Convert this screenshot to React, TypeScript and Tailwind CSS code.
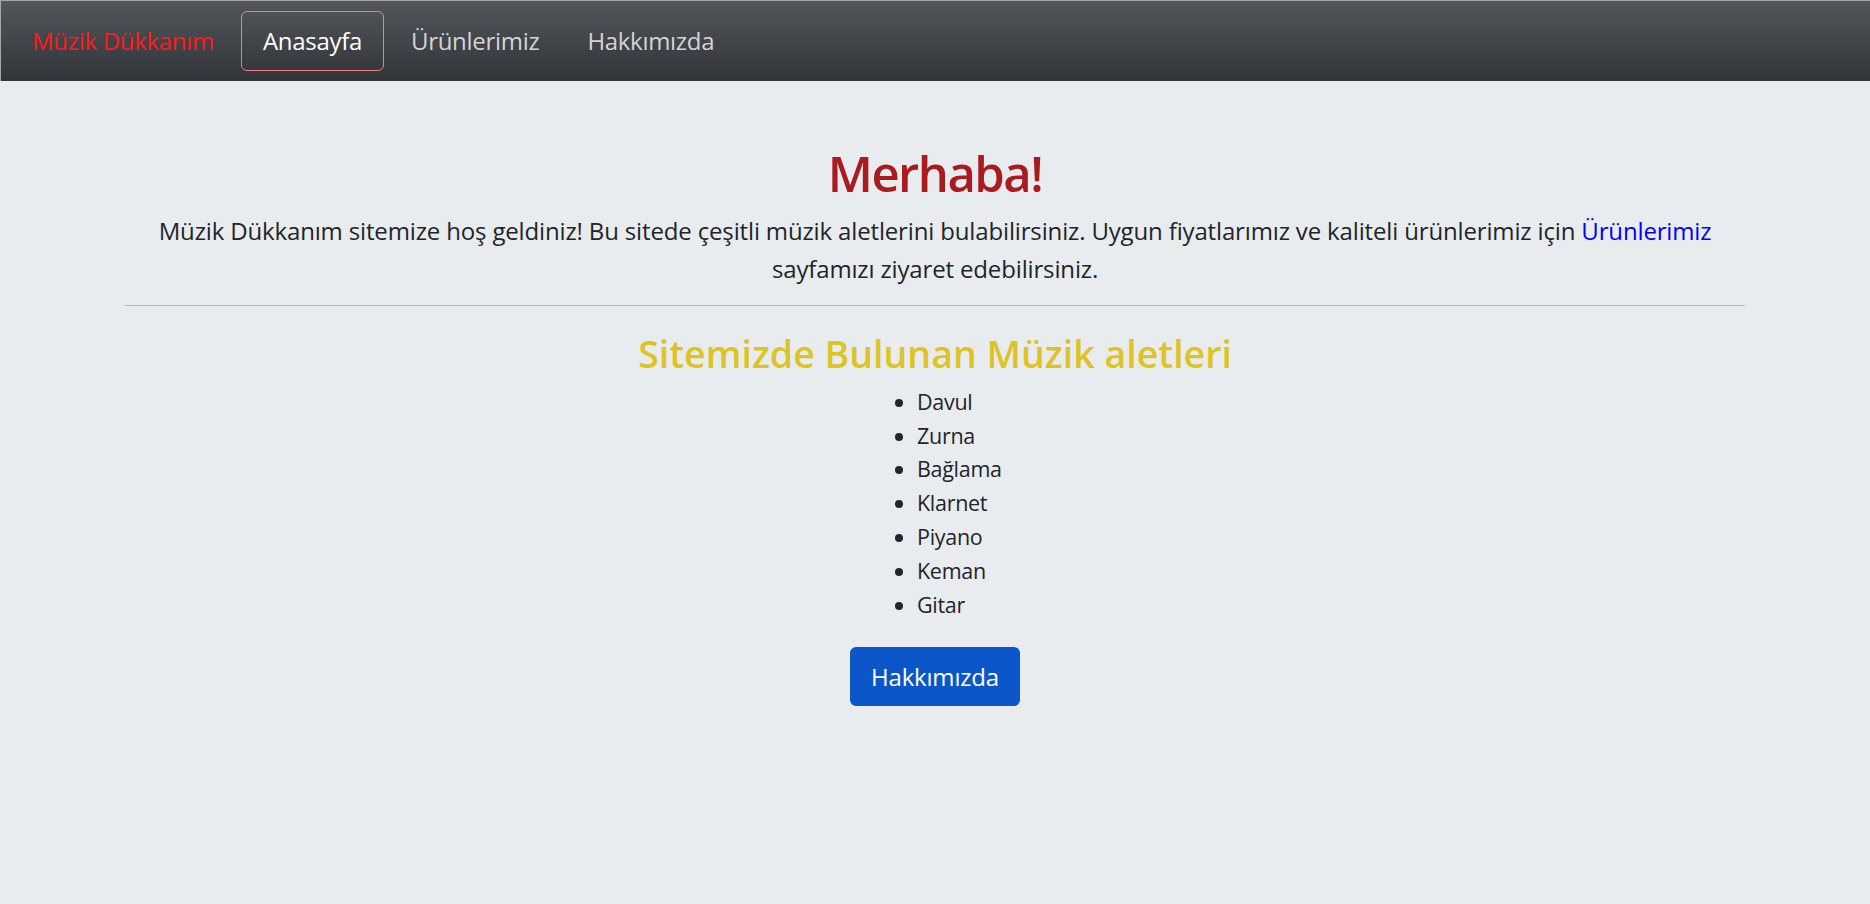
import React from "react";

const items = ["Davul", "Zurna", "Bağlama", "Klarnet", "Piyano", "Keman", "Gitar"];

export default function App() {
  return (
    <div className="min-h-[904px] bg-[#e9ecef] text-[#212529]" style={{ fontFamily: '"Open Sans", "Noto Sans", sans-serif' }}>
      <nav className="h-[81px] border-t border-l border-[#a3a7ae] bg-gradient-to-b from-[#53575b] to-[#313438] flex items-center pl-[31px] text-[24px] tracking-[-0.3px]">
        <span className="leading-none text-[#ff1a1a] mr-[27px]">Müzik Dükkanım</span>
        <a className="h-[60px] flex items-center px-[21px] border border-[#f08080] rounded-[6px] text-white">Anasayfa</a>
        <a className="h-[60px] flex items-center ml-[27px] text-[#d2d4d6]">Ürünlerimiz</a>
        <a className="h-[60px] flex items-center ml-[48px] text-[#d2d4d6]">Hakkımızda</a>
      </nav>
      <main className="mx-auto w-[1620px] text-center">
        <h1 className="mt-[63px] text-[49px] leading-[1.2] font-semibold tracking-[-1.5px] text-[#a91b1f]">Merhaba!</h1>
        <p className="mt-[9px] text-[24px] leading-[38px] tracking-[-0.15px]">
          Müzik Dükkanım sitemize hoş geldiniz! Bu sitede çeşitli müzik aletlerini bulabilirsiniz. Uygun fiyatlarımız ve kaliteli ürünlerimiz için{" "}
          <a className="text-[#0000ff]">Ürünlerimiz</a> sayfamızı ziyaret edebilirsiniz.
        </p>
        <hr className="mt-[17px] border-0 h-px bg-[#b5b9bd]" />
        <h2 className="mt-[25px] text-[37.5px] leading-[1.2] font-semibold text-[#ddc424]">Sitemizde Bulunan Müzik aletleri</h2>
        <div className="flex justify-center mt-[9px]">
          <ul className="w-[116px] pl-[40px] list-disc text-left text-[21.5px] leading-[33.8px] tracking-[-0.3px] whitespace-nowrap">
            {items.map((i) => (
              <li key={i}>{i}</li>
            ))}
          </ul>
        </div>
        <button className="mt-[26px] h-[59px] w-[170px] rounded-[6px] bg-[#0b57ca] text-white text-[24px] tracking-[-0.2px]">Hakkımızda</button>
      </main>
    </div>
  );
}
